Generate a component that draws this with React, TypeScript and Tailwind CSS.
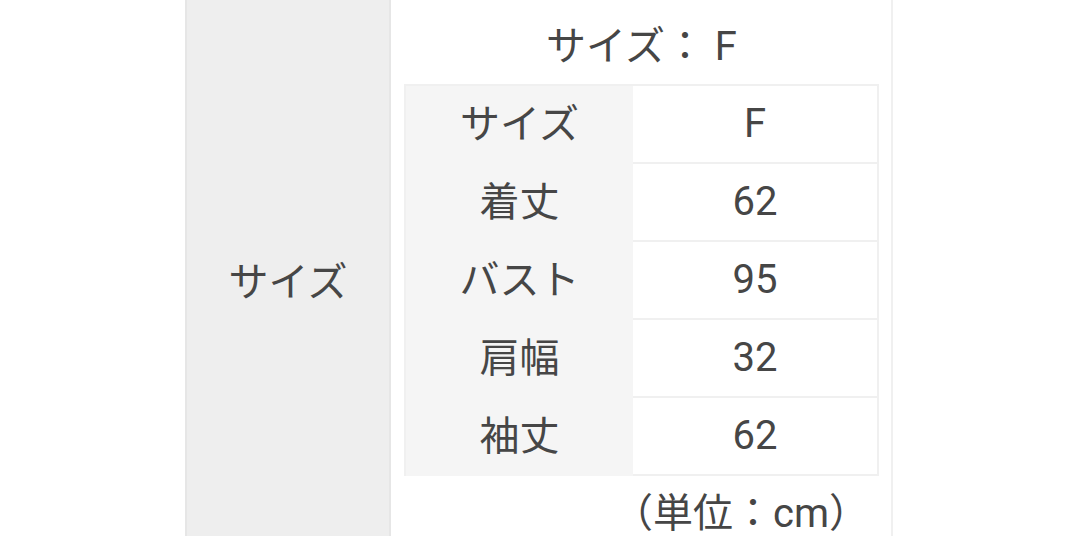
import React from "react";

const rows: [string, string][] = [
  ["サイズ", "F"],
  ["着丈", "62"],
  ["バスト", "95"],
  ["肩幅", "32"],
  ["袖丈", "62"],
];

export default function App() {
  return (
    <div
      className="w-[1080px] h-[536px] overflow-hidden bg-white flex text-[#464646]"
      style={{ fontFamily: 'Roboto, "Noto Sans CJK JP", sans-serif' }}
    >
      <div className="w-[185px] shrink-0" />
      <div className="w-[206px] shrink-0 bg-[#eeeeee] border-l-2 border-r-2 border-[#e6e6e6] flex items-center justify-center text-[40px] pt-[30px]">
        サイズ
      </div>
      <div className="w-[502px] shrink-0 border-r-2 border-[#f0f0f0] flex flex-col pl-[13px] pr-[12px]">
        <div className="h-[84px] shrink-0 flex items-center justify-center text-[40px] pt-[10px]">
          サイズ： F
        </div>
        <div className="shrink-0 grid grid-cols-[227px_1fr] border-t-2 border-l-2 border-[#f0f0f0]">
          {rows.map(([k, v], i) => (
            <React.Fragment key={i}>
              <div className="h-[78px] bg-[#f5f5f5] flex items-center justify-center text-[40px]">
                {k}
              </div>
              <div className="h-[78px] bg-white flex items-center justify-center text-[40px] border-r-2 border-b-2 border-[#f0f0f0]">
                {v}
              </div>
            </React.Fragment>
          ))}
        </div>
        <div className="h-[76px] shrink-0 flex items-center justify-end text-[40px] pr-[10px]">
          （単位：cm）
        </div>
      </div>
    </div>
  );
}
